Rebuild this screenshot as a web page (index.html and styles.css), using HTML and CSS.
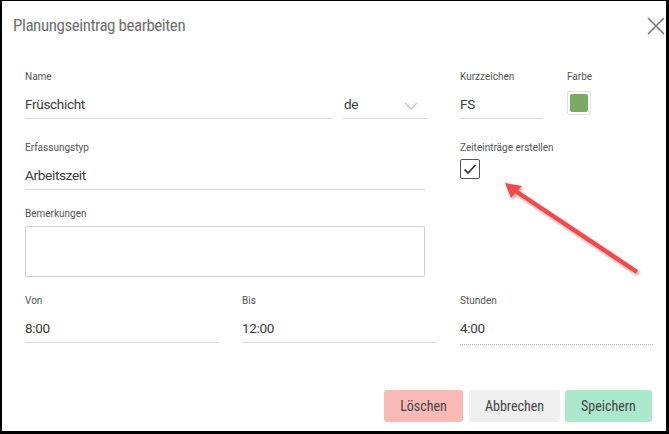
FILE: index.html
```html
<!DOCTYPE html>
<html lang="de">
<head>
  <meta charset="UTF-8" />
  <meta name="viewport" content="width=device-width,initial-scale=1.0">
  <title>Planungseintrag bearbeiten</title>
  <link rel="stylesheet" href="styles.css">
</head>
<body>
  <div class="frame">
    <div class="header">
      <span class="title">Planungseintrag bearbeiten</span>
      <svg class="close" width="18" height="18" viewBox="0 0 18 18">
        <path d="M1 1 L17 17 M17 1 L1 17" stroke="#777" stroke-width="1.6" fill="none"/>
      </svg>
    </div>

    <div class="form">
      <div class="row row1">
        <div class="field w-name">
          <div class="label">Name</div>
          <div class="value">Früschicht</div>
        </div>
        <div class="field w-lang">
          <div class="label">&nbsp;</div>
          <div class="value select">
            <span>de</span>
            <svg class="chevron" width="14" height="8" viewBox="0 0 14 8">
              <path d="M1 1 L7 7 L13 1" stroke="#c4c4c4" stroke-width="1.4" fill="none"/>
            </svg>
          </div>
        </div>
        <div class="field w-short">
          <div class="label">Kurzzeichen</div>
          <div class="value">FS</div>
        </div>
        <div class="field w-color">
          <div class="label">Farbe</div>
          <div class="swatch"><div class="swatch-fill"></div></div>
        </div>
      </div>

      <div class="row row2">
        <div class="field w-wide">
          <div class="label">Erfassungstyp</div>
          <div class="value">Arbeitszeit</div>
        </div>
        <div class="field">
          <div class="label">Zeiteinträge erstellen</div>
          <div class="checkbox">
            <svg width="14" height="12" viewBox="0 0 14 12">
              <path d="M1.5 6.5 L5 10 L12.5 2" stroke="#333" stroke-width="1.7" fill="none"/>
            </svg>
          </div>
        </div>
      </div>

      <div class="row row3">
        <div class="field w-wide">
          <div class="label">Bemerkungen</div>
          <div class="textarea"></div>
        </div>
      </div>

      <div class="row row4">
        <div class="field w-time">
          <div class="label">Von</div>
          <div class="value">8:00</div>
        </div>
        <div class="field w-time2">
          <div class="label">Bis</div>
          <div class="value">12:00</div>
        </div>
        <div class="field w-time">
          <div class="label">Stunden</div>
          <div class="value dotted">4:00</div>
        </div>
      </div>
    </div>

    <div class="actions">
      <button class="btn btn-delete">Löschen</button>
      <button class="btn btn-cancel">Abbrechen</button>
      <button class="btn btn-save">Speichern</button>
    </div>

    <svg class="arrow" width="669" height="434" viewBox="0 0 669 434">
      <defs>
        <filter id="shadow" x="-20%" y="-20%" width="140%" height="140%">
          <feDropShadow dx="1.5" dy="2" stdDeviation="1.5" flood-color="#000" flood-opacity="0.35"/>
        </filter>
      </defs>
      <g filter="url(#shadow)">
        <line x1="637" y1="272" x2="514" y2="190" stroke="#f44a4a" stroke-width="4.5"/>
        <polygon points="505,183 522,186 511,198" fill="#f44a4a"/>
      </g>
    </svg>
  </div>
</body>
</html>
```

FILE: styles.css
```css
html, body {
  margin: 0;
  padding: 0;
  background: #fff;
}

.frame {
  position: relative;
  width: 669px;
  height: 434px;
  box-sizing: border-box;
  border-style: solid;
  border-color: #000;
  border-width: 1px 3px 3px 2px;
  background: #fff;
  font-family: Roboto, "Liberation Sans", sans-serif;
  color: #333;
  overflow: hidden;
}

.header {
  display: flex;
  align-items: center;
  justify-content: space-between;
  height: 48px;
  padding: 0 1px 0 11px;
}

.title {
  font-size: 17px;
  font-stretch: condensed;
  letter-spacing: -0.45px;
  color: #6f6f6f;
}

.close {
  margin-top: 2px;
}

.form {
  padding: 22px 0 0 23px;
}

.row {
  display: flex;
}

.row1 { margin-bottom: 23px; }
.row2 { margin-bottom: 18px; }
.row3 { margin-bottom: 18px; }

.row1 .w-name { margin-right: 11px; }
.row1 .w-lang { margin-right: 33px; }
.row1 .w-short { margin-right: 24px; }

.w-name { width: 307px; }
.w-lang { width: 84px; }
.w-short { width: 83px; }
.w-color { width: 40px; }
.w-wide { width: 400px; margin-right: 35px; }
.w-time { width: 193px; }
.w-time2 { width: 194px; margin: 0 24px; }

.label {
  font-size: 10px;
  line-height: 12px;
  color: #555;
  margin-bottom: 8px;
  white-space: nowrap;
}

.value {
  height: 27px;
  line-height: 27px;
  font-size: 13.5px;
  letter-spacing: -0.3px;
  color: #3a3a3a;
  border-bottom: 1px solid #d6d6d6;
}

.value.dotted {
  height: 29px;
  border-bottom: 1px dotted #bbb;
}

.select {
  display: flex;
  justify-content: space-between;
  align-items: center;
  padding-left: 1px;
}

.chevron {
  margin-right: 9px;
  margin-top: 2px;
}

.swatch {
  width: 24px;
  height: 24px;
  box-sizing: border-box;
  margin-top: 3px;
  border: 1px solid #e2e2e2;
  border-radius: 2px;
  padding: 2px;
}

.swatch-fill {
  width: 100%;
  height: 100%;
  background: #79aa66;
  border-radius: 2px;
}

.row2 .label + .checkbox {
  margin-top: -3px;
}

.checkbox {
  width: 20px;
  height: 20px;
  box-sizing: border-box;
  border: 1.5px solid #555;
  border-radius: 2px;
  display: flex;
  align-items: center;
  justify-content: center;
}

.row3 .label {
  margin-bottom: 6px;
}

.textarea {
  height: 51px;
  box-sizing: border-box;
  border: 1px solid #d0d0d0;
  border-radius: 2px;
}

.actions {
  position: absolute;
  right: 14px;
  bottom: 9px;
  display: flex;
  gap: 6px;
}

.btn {
  height: 32px;
  border: none;
  border-radius: 3px;
  font-family: Roboto, "Liberation Sans", sans-serif;
  font-size: 14px;
  font-stretch: condensed;
  color: #444;
  padding: 0;
}

.btn-delete { width: 79px; background: #f9bab6; }
.btn-cancel { width: 91px; background: #efefef; }
.btn-save { width: 87px; background: #abe9cc; margin-left: -1px; }

.arrow {
  position: absolute;
  left: -2px;
  top: -1px;
  pointer-events: none;
}
```
